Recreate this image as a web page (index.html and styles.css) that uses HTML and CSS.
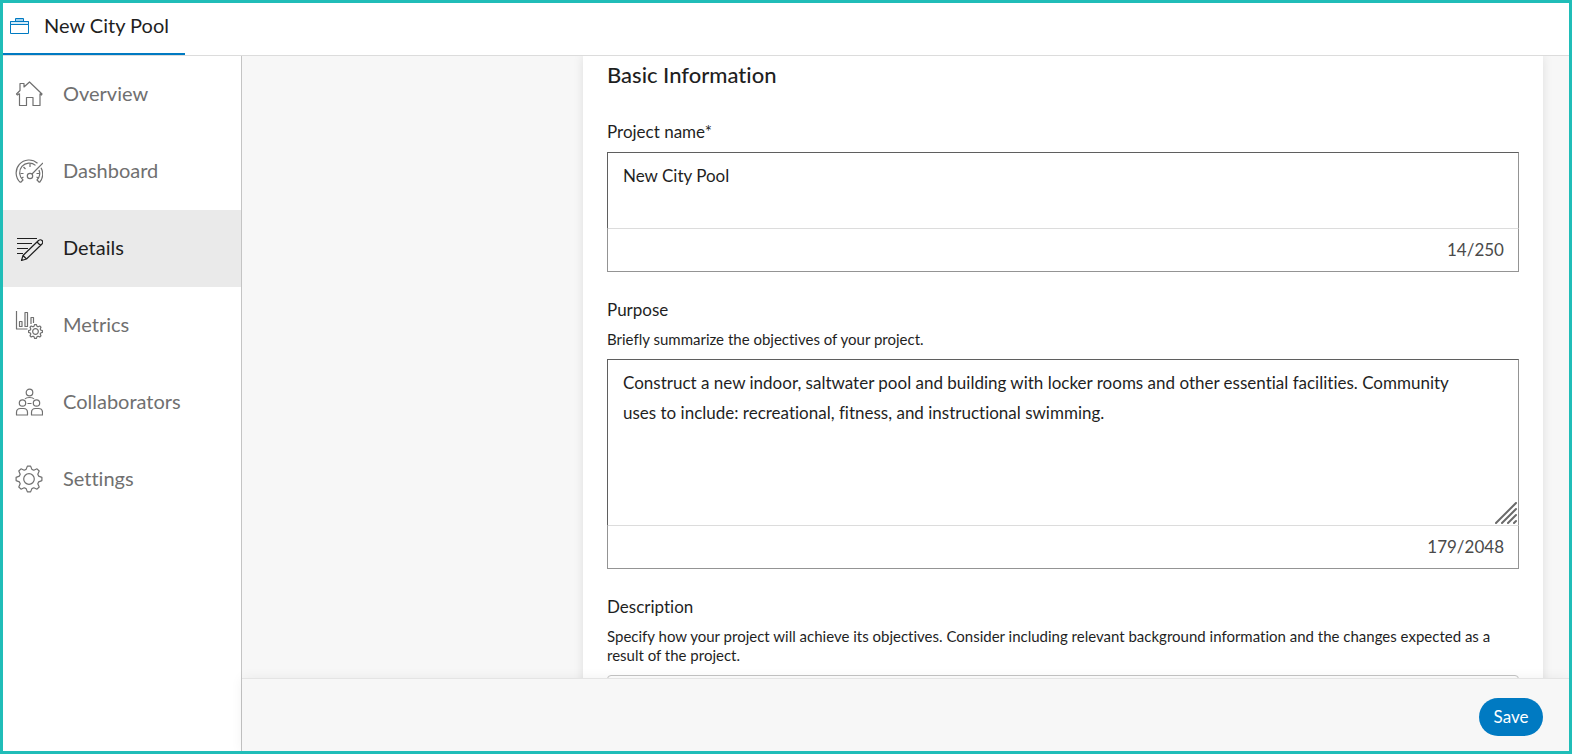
FILE: index.html
```
<!DOCTYPE html>
<html lang="en">
<head>
    <meta charset="UTF-8">
    <meta name="viewport" content="width=device-width, initial-scale=1.0">
    <title>New City Pool</title>
    <link rel="stylesheet" href="styles.css">
</head>
<body>

<!-- Shared gear shape -->
<svg class="sprite" aria-hidden="true">
    <symbol id="gear" viewBox="-14 -14 28 28">
        <path vector-effect="non-scaling-stroke" d="M-1.6 -12.9H1.6L2.9 -9.6L4.8 -8.8L8 -10.2L10.2 -8L8.8 -4.8L9.6 -2.9L12.9 -1.6V1.6L9.6 2.9L8.8 4.8L10.2 8L8 10.2L4.8 8.8L2.9 9.6L1.6 12.9H-1.6L-2.9 9.6L-4.8 8.8L-8 10.2L-10.2 8L-8.8 4.8L-9.6 2.9L-12.9 1.6V-1.6L-9.6 -2.9L-8.8 -4.8L-10.2 -8L-8 -10.2L-4.8 -8.8L-2.9 -9.6Z"/>
        <circle vector-effect="non-scaling-stroke" r="5.3"/>
    </symbol>
</svg>

<!-- Header -->
<header class="top-bar">
    <a class="tab" href="#">
        <svg class="tab-icon" viewBox="0 0 20 18" aria-hidden="true">
            <path d="M5.500 4.500V1.500h8v3" fill="#9fd0ee"/>
            <path d="M.5 4.500h18v12H.5z" fill="#fff"/>
            <path d="M.5 4.500h18v3H.5z" fill="#d3eaf8"/>
        </svg>
        New City Pool
    </a>
</header>

<div class="layout">

    <!-- Side Navigation -->
    <nav class="side-nav">
        <a href="#">
            <svg class="icon" viewBox="0 0 28 28" aria-hidden="true">
                <path d="M4.500 13.500V25.500H11.500V17.500H18V25.500H25V13.500M4.500 13.500L2.500 15L1.500 14L5 10.500V3.500H9V7L14.500 2L27 14L26.500 15L25 13.500"/>
            </svg>
            Overview
        </a>
        <a href="#">
            <svg class="icon" viewBox="0 0 28 28" aria-hidden="true">
                <path d="M5.500 25.500A12.500 12.500 0 0 1 22.500 6.200M26 10.800A12.500 12.500 0 0 1 24.500 25.500"/>
                <path d="M5.500 25.500L8 23A9.500 9.500 0 0 1 20.500 8.400M24 13A9.500 9.500 0 0 1 22 23L24.500 25.500"/>
                <path d="M15 7v3M8.500 10l2 2M5.500 16.500h3M6.500 21l2-1M24.500 16.500h-3M23.500 21l-2-1M17 17L28 6"/>
                <circle cx="15" cy="19" r="2.700"/>
            </svg>
            Dashboard
        </a>
        <a class="active" href="#" aria-current="page">
            <svg class="icon" viewBox="0 0 28 28" aria-hidden="true">
                <path d="M2 4.500H22M2 9.500H17M2 14.500H13M2 19.500H8"/>
                <path d="M6.500 26.500L8 21.500L23.500 6.500Q25.500 5 27 6.500Q28.500 8 27 10L11.500 25ZM8 21.500L11.500 25M22 8L25.500 11.500"/>
            </svg>
            Details
        </a>
        <a href="#">
            <svg class="icon" viewBox="0 0 28 28" aria-hidden="true">
                <path d="M1.500 0V18H12.500M4.500 10.500H7V15.500H4.500ZM10 1.500H12.500V15.500H10ZM16 13V6.500H18.500V12"/>
                <use href="#gear" x="13" y="13" width="15" height="15"/>
            </svg>
            Metrics
        </a>
        <a href="#">
            <svg class="icon" viewBox="0 0 28 28" aria-hidden="true">
                <circle cx="14.500" cy="4.500" r="3.300"/>
                <circle cx="7.500" cy="15" r="3.200"/>
                <circle cx="21.500" cy="15" r="3.200"/>
                <path d="M10 11Q11 9.500 14.500 9.500T19 11M12.500 15.500h4"/>
                <path d="M1.500 27V24.500Q1.500 20.500 5.500 20.500H8.500Q12.500 20.500 12.500 24.500V27ZM16.500 27V24.500Q16.500 20.500 20.500 20.500H23.500Q27.500 20.500 27.500 24.500V27Z"/>
            </svg>
            Collaborators
        </a>
        <a href="#">
            <svg class="icon" viewBox="0 0 28 28" aria-hidden="true">
                <use href="#gear" width="28" height="28"/>
            </svg>
            Settings
        </a>
    </nav>

    <!-- Details Form -->
    <main class="content">
        <div class="scroll-area">
            <form class="card" id="details-form">
                <h2>Basic Information</h2>

                <div class="field">
                    <label for="project-name">Project name*</label>
                    <div class="text-box">
                        <textarea id="project-name" class="short" maxlength="250">New City Pool</textarea>
                        <div class="counter">14/250</div>
                    </div>
                </div>

                <div class="field">
                    <label for="purpose">Purpose</label>
                    <p class="hint" id="purpose-hint">Briefly summarize the objectives of your project.</p>
                    <div class="text-box">
                        <textarea id="purpose" class="tall" maxlength="2048" aria-describedby="purpose-hint">Construct a new indoor, saltwater pool and building with locker rooms and other essential facilities. Community uses to include: recreational, fitness, and instructional swimming.</textarea>
                        <svg class="grip" viewBox="0 0 22 22" aria-hidden="true">
                            <path d="M1 21L21 1M7 21L21 7M13 21L21 13M19 21L21 19"/>
                        </svg>
                        <div class="counter">179/2048</div>
                    </div>
                </div>

                <div class="field">
                    <label for="description">Description</label>
                    <p class="hint" id="description-hint">Specify how your project will achieve its objectives. Consider including relevant background information and the changes expected as a result of the project.</p>
                    <div class="text-box">
                        <textarea id="description" class="tall editor" aria-describedby="description-hint"></textarea>
                    </div>
                </div>
            </form>
        </div>

        <footer class="action-bar">
            <button type="submit" form="details-form">Save</button>
        </footer>
    </main>
</div>

</body>
</html>
```
FILE: styles.css
```
/* Global Styles */
* {
    box-sizing: border-box;
}

body {
    display: flex;
    flex-direction: column;
    height: 100vh;
    margin: 0;
    border: 3px solid #20bdb8;
    overflow: hidden;
    font-family: Lato, sans-serif;
    font-size: 17px;
    font-variant-ligatures: none;
    line-height: 20px;
    color: #1f1f1f;
    background-color: #fff;
}

.sprite {
    display: none;
}

/* Header */
.top-bar {
    display: flex;
    flex-shrink: 0;
    height: 53px;
    border-bottom: 1px solid #dcdcdc;
}

.tab {
    display: flex;
    align-items: center;
    gap: 14px;
    padding: 0 16px 8px 7px;
    box-shadow: inset 0 -2px #007ac2;
    font-size: 20px;
    color: #1f1f1f;
    text-decoration: none;
}

.tab-icon {
    width: 20px;
    height: 18px;
    margin-top: 2px;
    stroke: #007ac2;
}

.layout {
    display: flex;
    flex: 1;
    min-height: 0;
}

/* Side Navigation */
.side-nav {
    flex: 0 0 239px;
    border-right: 1px solid #c4c4c4;
}

.side-nav a {
    display: flex;
    align-items: center;
    gap: 20px;
    height: 77px;
    padding: 0 12px 4px;
    font-size: 20px;
    color: #707070;
    text-decoration: none;
}

.side-nav a.active {
    background-color: #eaeaea;
    color: #1f1f1f;
}

.icon {
    width: 28px;
    height: 28px;
    margin-top: 2px;
    fill: none;
    stroke: currentColor;
    stroke-width: 1.2;
    stroke-linejoin: round;
}

/* Content */
.content {
    display: flex;
    flex: 1;
    flex-direction: column;
    min-width: 0;
    background-color: #f7f7f7;
}

.scroll-area {
    flex: 1;
    min-height: 0;
    padding: 0 26px 0 341px;
    overflow: hidden;
}

.card {
    padding: 5px 24px 24px;
    background-color: #fff;
    box-shadow: 0 0 10px rgba(0, 0, 0, 0.1);
}

.card h2 {
    margin: 0 0 33px;
    font-size: 22px;
    font-weight: 500;
    line-height: 28px;
}

.field {
    margin-bottom: 28px;
}

.field label {
    display: block;
    margin-bottom: 10px;
}

.hint {
    margin: 0 0 10px;
    font-size: 15px;
    line-height: 19px;
}

.text-box {
    position: relative;
}

.text-box textarea {
    display: block;
    width: 100%;
    padding: 8px 40px 8px 15px;
    border: 1px solid;
    border-color: #5f5f5f #949494 #dcdcdc #5f5f5f;
    border-radius: 0;
    background: none;
    color: inherit;
    font: inherit;
    font-variant-ligatures: none;
    line-height: 30px;
    resize: none;
    overflow: hidden;
}

.text-box .short {
    height: 77px;
}

.text-box .tall {
    height: 167px;
}

.text-box .editor {
    border-color: #c4c4c4;
    border-radius: 4px;
}

.counter {
    padding: 11px 14px;
    border: 1px solid #949494;
    border-top: none;
    color: #4a4a4a;
    text-align: right;
}

.grip {
    position: absolute;
    right: 2px;
    bottom: 45px;
    width: 22px;
    height: 22px;
    stroke: #6a6a6a;
    stroke-width: 2;
    stroke-linecap: round;
}

/* Action Bar */
.action-bar {
    position: relative;
    flex-shrink: 0;
    padding: 19px 26px 15px;
    border-top: 1px solid #e4e4e4;
    background-color: #f7f7f7;
    box-shadow: 0 0 12px rgba(0, 0, 0, 0.06);
    text-align: right;
}

.action-bar button {
    min-width: 64px;
    height: 38px;
    padding: 0 14px;
    border: none;
    border-radius: 19px;
    background-color: #007ac2;
    color: #fff;
    font: inherit;
    cursor: pointer;
}
```
